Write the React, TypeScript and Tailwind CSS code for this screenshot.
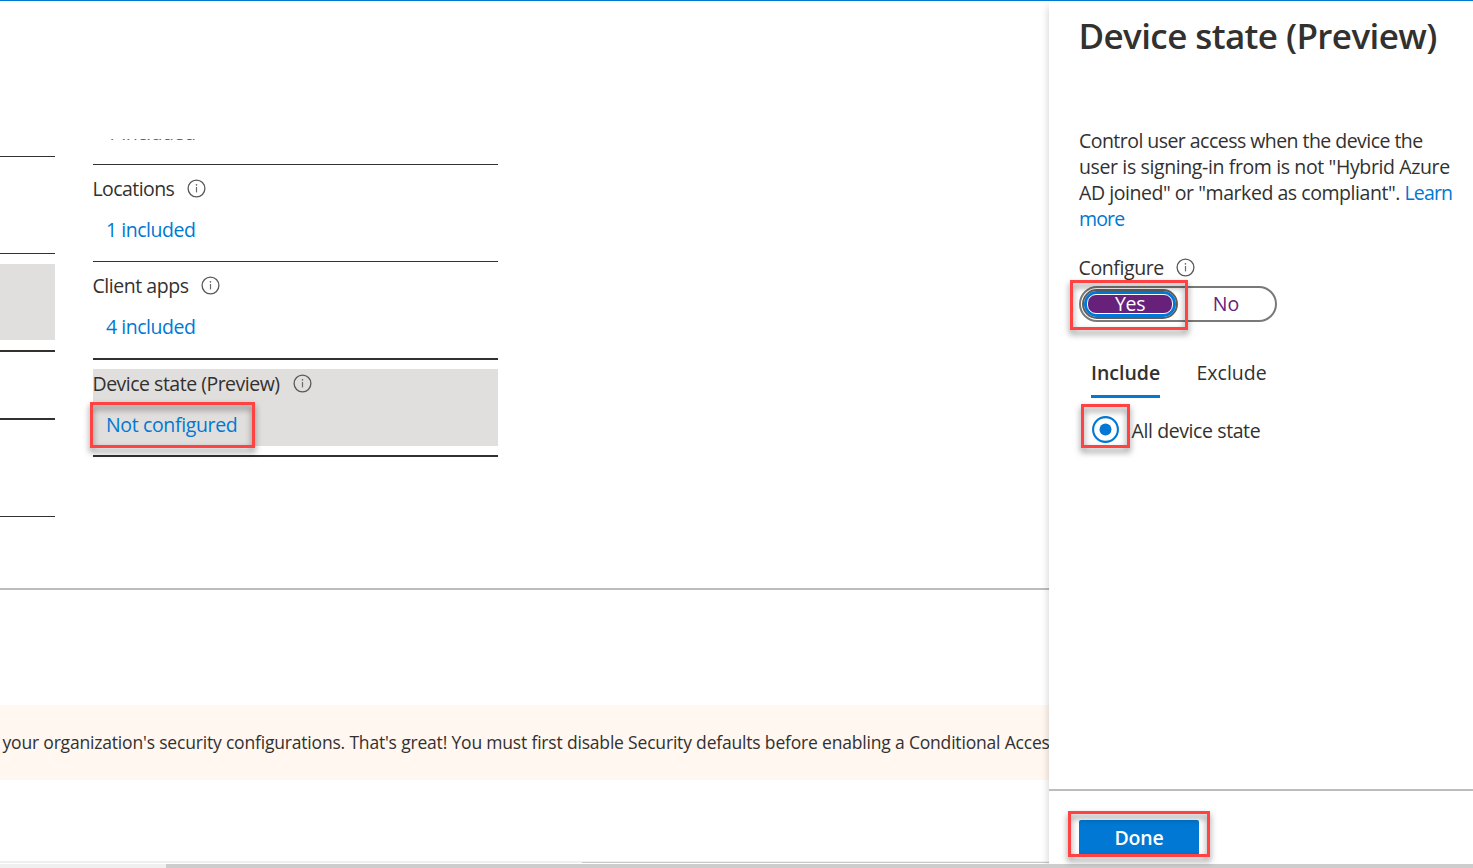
import React from "react";

function InfoIcon() {
  return (
    <svg width="19" height="19" viewBox="0 0 19 19" fill="none" className="-mt-px shrink-0">
      <circle cx="9.5" cy="9.5" r="8.4" stroke="#5a5958" strokeWidth="1.3" />
      <path d="M9.5 8v5.4" stroke="#6a6968" strokeWidth="1.2" />
      <circle cx="9.5" cy="5.8" r="0.85" fill="#6a6968" />
    </svg>
  );
}

/* Red callout frame laid over a control */
function Callout({ className }: { className: string }) {
  return (
    <div
      className={`pointer-events-none absolute z-10 border-3 border-[#ff4343] [filter:drop-shadow(0_4px_3px_rgba(0,0,0,0.5))] ${className}`}
    />
  );
}

function Condition({ label, value, labelClass, valueClass, className }: {
  label: string;
  value: string;
  labelClass: string;
  valueClass: string;
  className: string;
}) {
  return (
    <div className={`border-[#323130] pt-3 ${className}`}>
      <div className="flex h-6 items-center gap-[12.5px]">
        <span className={`-ml-[0.5px] ${labelClass}`}>{label}</span>
        <InfoIcon />
      </div>
      <a className={`mt-[17px] block pl-[13px] text-[#0078d4] ${valueClass}`}>{value}</a>
    </div>
  );
}

function Assignments() {
  return (
    <div className="flex h-[587px] gap-[38px] pt-[138px]">
      <div className="w-[55px]">
        <div className="h-[18px] border-b border-[#323130]" />
        <div className="h-[97px] border-b border-[#323130]" />
        <div className="h-[98px] border-b-2 border-[#323130] pt-[10px]">
          <div className="h-[76px] bg-[#e1dfdd]" />
        </div>
        <div className="h-[68px] border-b-2 border-[#323130]" />
        <div className="h-[97px] border-b border-[#323130]" />
      </div>
      <div className="w-[405px]">
        <div className="flex h-[26px] flex-col justify-end overflow-hidden border-b border-[#323130] pb-[19px] pl-[13px]">
          <a className="shrink-0 tracking-[-0.48px] text-[#0078d4]">1 included</a>
        </div>
        <Condition label="Locations" value="1 included" className="h-[97px] border-b" labelClass="tracking-[-0.58px]" valueClass="tracking-[-0.48px]" />
        <Condition label="Client apps" value="4 included" className="h-[98px] border-b-2" labelClass="tracking-[-0.46px]" valueClass="tracking-[-0.48px]" />
        <div className="h-[97px] border-b-2 border-[#323130] pt-[9px]">
          <div className="relative h-[77px] bg-[#e1dfdd] pt-[3px]">
            <div className="flex h-6 items-center gap-[13.5px]">
              <span className="-ml-[0.5px] tracking-[-0.5px]">Device state (Preview)</span>
              <InfoIcon />
            </div>
            <a className="mt-[17px] block pl-[13px] tracking-[-0.36px] text-[#0078d4]">Not configured</a>
            <Callout className="-left-[3px] top-[33px] h-[46px] w-[165px]" />
          </div>
        </div>
      </div>
    </div>
  );
}

function Workspace() {
  return (
    <main className="flex h-[862px] w-[1049px] flex-col overflow-hidden">
      <Assignments />
      <div className="h-[2px] shrink-0 bg-[#bdbcbb]" />
      <div className="mt-[115px] h-[75px] shrink-0 overflow-hidden bg-[#fff7f0] pl-[2.5px] pt-[25px]">
        <p className="whitespace-nowrap text-[17.5px] leading-6 tracking-[-0.185px]">
          your organization's security configurations. That's great! You must first disable Security defaults before enabling a Conditional Acces
        </p>
      </div>
      <div className="mt-[81px] flex h-[2px] shrink-0 bg-[#efefef]">
        <div className="ml-[582px] mt-px h-px flex-1 bg-[#c8c8c8]" />
      </div>
    </main>
  );
}

function ConfigureToggle() {
  return (
    <div className="relative mt-[6px] flex h-9 w-[198px] rounded-full border-2 border-[#7a7978] p-px">
      <button className="h-[30px] w-24 rounded-full border-2 border-[#605e5c]">
        <span className="block h-[26px] rounded-full border-3 border-[#0078d7] bg-[#0078d7]">
          <span className="block h-5 rounded-[9px] border-[1.5px] border-white bg-[#68217a] text-center leading-[18px] tracking-[-0.3px] text-white">Yes</span>
        </span>
      </button>
      <button className="flex-1 pb-px text-center tracking-[0.1px] text-[#68217a]">No</button>
      <Callout className="-left-[11px] -top-[8px] h-[50px] w-[118px]" />
    </div>
  );
}

function DevicePanel() {
  return (
    <aside className="relative flex h-[863px] w-[424px] flex-col bg-white shadow-[0_5px_8px_rgba(0,0,0,0.2)]">
      <div className="h-[788px] pl-[30px] pt-[15px]">
        <h1 className="-ml-[0.5px] whitespace-nowrap text-[35px] font-semibold leading-10 tracking-[-0.6px]">Device state (Preview)</h1>
        <p className="mt-[72px] whitespace-nowrap leading-[26px]">
          <span className="tracking-[-0.54px]">Control user access when the device the</span>
          <br />
          <span className="tracking-[-0.38px]">user is signing-in from is not "Hybrid Azure</span>
          <br />
          <span className="tracking-[-0.45px]">AD joined" or "marked as compliant". </span>
          <a className="tracking-[-0.85px] text-[#0078d4]">Learn<br />more</a>
        </p>
        <div className="mt-6 flex h-6 items-center gap-[12.5px]">
          <span className="-ml-[0.5px] tracking-[-0.4px]">Configure</span>
          <InfoIcon />
        </div>
        <ConfigureToggle />
        <div className="mt-[38px] flex gap-[36.5px] pl-3">
          <div className="h-[38px] w-[69px] border-b-3 border-[#0078d4] pt-px font-semibold">Include</div>
          <div className="h-[38px] pt-px">Exclude</div>
        </div>
        <div className="relative mt-[18px] flex gap-[13px] pl-[13px]">
          <svg width="27" height="27" viewBox="0 0 27 27" fill="none">
            <circle cx="13.5" cy="13.5" r="12.4" stroke="#0078d4" strokeWidth="2.1" />
            <circle cx="13.5" cy="13.5" r="6" fill="#0078d4" />
          </svg>
          <span className="mt-[3px] -ml-[0.5px] tracking-[-0.4px]">All device state</span>
          <Callout className="left-[2px] -top-[12px] h-[44px] w-[49px]" />
        </div>
      </div>
      <footer className="flex-1 border-t-2 border-[#bdbcbb] pl-[30px] pt-[29px]">
        <div className="relative">
          <button className="block h-[34px] w-[120px] rounded-t-[2px] bg-[#0078d4] pt-[2px] text-center font-semibold tracking-[-0.2px] text-white">Done</button>
          <Callout className="-left-[11px] -top-[9px] h-[46px] w-[142px]" />
        </div>
      </footer>
    </aside>
  );
}

export default function App() {
  return (
    <div className="flex h-[868px] w-[1473px] flex-col overflow-hidden bg-white font-['Open_Sans','Noto_Sans',sans-serif] text-[19.5px] leading-6 text-[#323130]">
      <div className="relative z-20 h-px shrink-0 bg-[#0078d4]" />
      <div className="flex h-[863px] shrink-0">
        <Workspace />
        <DevicePanel />
      </div>
      <div className="relative h-1 bg-[#f0f0f0]">
        <div className="ml-[166px] h-1 bg-[#cdcdcd]" />
      </div>
    </div>
  );
}
